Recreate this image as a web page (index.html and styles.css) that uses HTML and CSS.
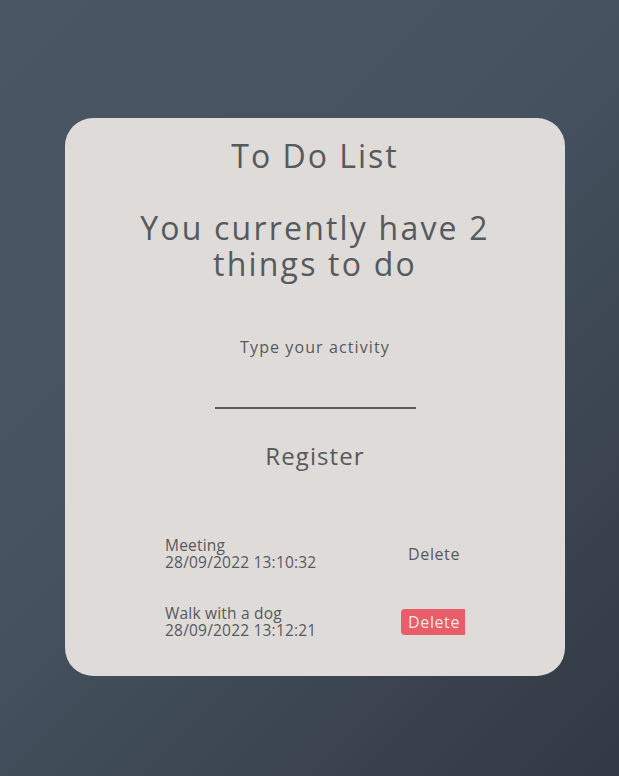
FILE: index.html
```html
<!DOCTYPE html>
<html>
<head>
<meta charset="utf-8">
<link rel="stylesheet" href="styles.css">
</head>
<body>
<div class="page">
  <div class="card">
    <h1 class="title">To Do List</h1>
    <h2 class="count">You currently have 2<br>things to do</h2>
    <label class="label">Type your activity</label>
    <div class="input"></div>
    <div class="register">Register</div>
    <ul class="list">
      <li class="item">
        <div class="info"><div>Meeting</div><div>28/09/2022 13:10:32</div></div>
        <span class="delete">Delete</span>
      </li>
      <li class="item">
        <div class="info"><div>Walk with a dog</div><div>28/09/2022 13:12:21</div></div>
        <span class="delete active">Delete</span>
      </li>
    </ul>
  </div>
</div>
</body>
</html>
```
FILE: styles.css
```css
html, body {
  margin: 0;
  height: 100%;
}
body {
  background: linear-gradient(135deg, #4b5664 0%, #465260 45%, #323944 100%);
  font-family: "Open Sans", "Noto Sans", sans-serif;
  color: #555a5e;
}
.page {
  display: flex;
  justify-content: center;
  padding: 118px 0 0 11px;
}
.card {
  width: 500px;
  height: 558px;
  box-sizing: border-box;
  background: #dfdbd8;
  border-radius: 28px;
  display: flex;
  flex-direction: column;
  align-items: center;
  padding-top: 17px;
}
.title {
  margin: 0;
  font-size: 32px;
  font-weight: 400;
  line-height: 42px;
  letter-spacing: 2px;
}
.count {
  margin: 33px 0 0;
  font-size: 32px;
  font-weight: 400;
  line-height: 36px;
  text-align: center;
  letter-spacing: 2.2px;
}
.label {
  margin-top: 54px;
  font-size: 16px;
  line-height: 22px;
  letter-spacing: 1.1px;
}
.input {
  margin-top: 49px;
  width: 201px;
  height: 2px;
  background: #555a5e;
}
.register {
  margin-top: 32px;
  font-size: 24px;
  line-height: 30px;
  letter-spacing: 1.1px;
}
.list {
  list-style: none;
  margin: 66px 0 0;
  padding: 0;
  width: 300px;
  display: flex;
  flex-direction: column;
  gap: 34px;
}
.item {
  display: flex;
  justify-content: space-between;
  align-items: center;
}
.info {
  font-size: 15.5px;
  line-height: 17px;
  letter-spacing: 0.2px;
}
.delete {
  font-size: 16px;
  line-height: 26px;
  padding: 0 5px 0 7px;
  border-radius: 4px 0 0 4px;
  letter-spacing: 0.6px;
}
.delete.active {
  background: #e85d67;
  color: #f3e6e6;
}
```
